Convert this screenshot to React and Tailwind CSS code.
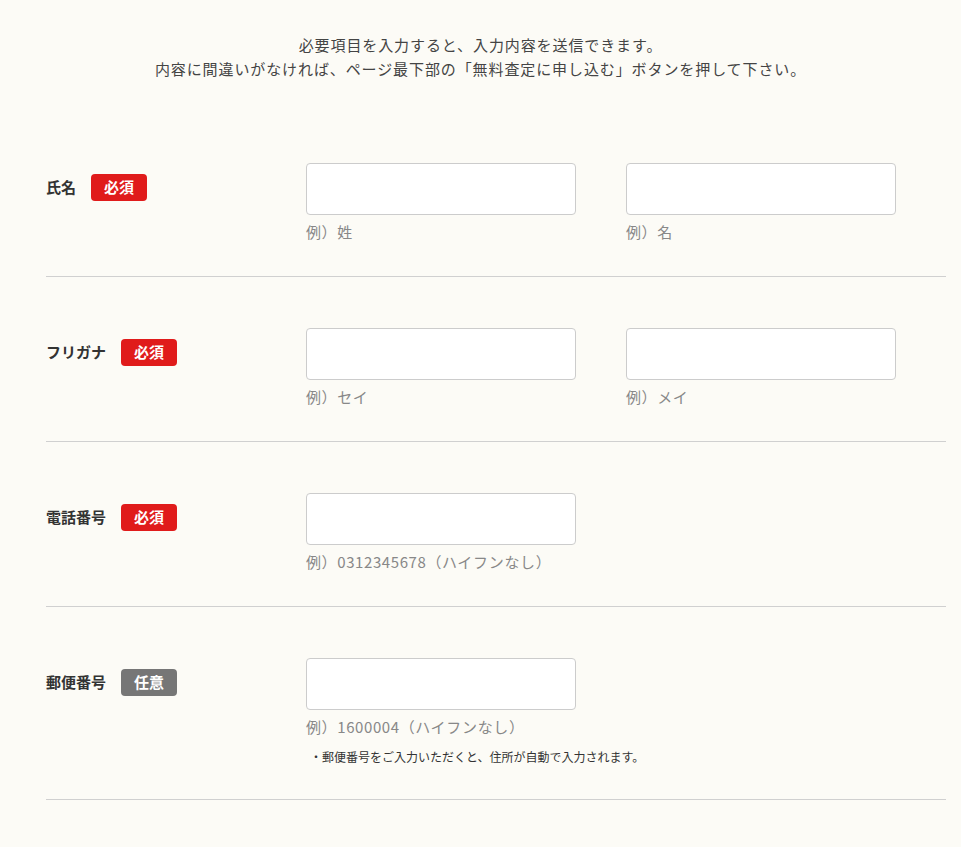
import React from 'react';

const Badge = ({ required }) => (
  <span
    className={`inline-flex items-center justify-center h-[27px] w-[56px] rounded-[4px] text-white text-[15px] font-bold ${
      required ? 'bg-[#e01b1b]' : 'bg-[#767676]'
    }`}
  >
    {required ? '必須' : '任意'}
  </span>
);

const Field = ({ hint }) => (
  <div className="w-[270px]">
    <input className="block w-full h-[52px] bg-white border border-[#cccccc] rounded-[4px] outline-none" />
    <p className="mt-[6px] text-[15px] tracking-[0.04em] text-[#888] leading-[22px]">{hint}</p>
  </div>
);

const Row = ({ label, required, hints, note, last }) => (
  <div className={`flex pt-[51px] pb-[33px] ${last ? '' : 'border-b border-[#d0d0d0]'}`}>
    <div className="w-[260px] shrink-0 flex items-center gap-[15px] h-[27px] mt-[11px]">
      {label && <span className="text-[15px] font-bold text-[#333]">{label}</span>}
      {label && <Badge required={required} />}
    </div>
    <div>
      <div className="flex gap-[50px]">
        {hints.map((h, i) => (
          <Field key={i} hint={h} />
        ))}
      </div>
      {note && <p className="mt-[10px] ml-[4px] text-[12px] text-[#333]">{note}</p>}
    </div>
  </div>
);

export default function App() {
  return (
    <div
      className="h-[847px] bg-[#fcfbf6] overflow-hidden"
      style={{ fontFamily: '"Noto Sans CJK JP", "Noto Sans", sans-serif' }}
    >
      <div className="pt-[33px] text-center text-[15px] tracking-[0.06em] leading-[24px] text-[#444]">
        <p>必要項目を入力すると、入力内容を送信できます。</p>
        <p>内容に間違いがなければ、ページ最下部の「無料査定に申し込む」ボタンを押して下さい。</p>
      </div>
      <div className="ml-[46px] w-[900px] mt-[31px]">
        <Row label="氏名" required hints={['例）姓', '例）名']} />
        <Row label="フリガナ" required hints={['例）セイ', '例）メイ']} />
        <Row label="電話番号" required hints={['例）0312345678（ハイフンなし）']} />
        <Row
          label="郵便番号"
          hints={['例）1600004（ハイフンなし）']}
          note="・郵便番号をご入力いただくと、住所が自動で入力されます。"
        />
        <Row label="" hints={['']} last />
      </div>
    </div>
  );
}
